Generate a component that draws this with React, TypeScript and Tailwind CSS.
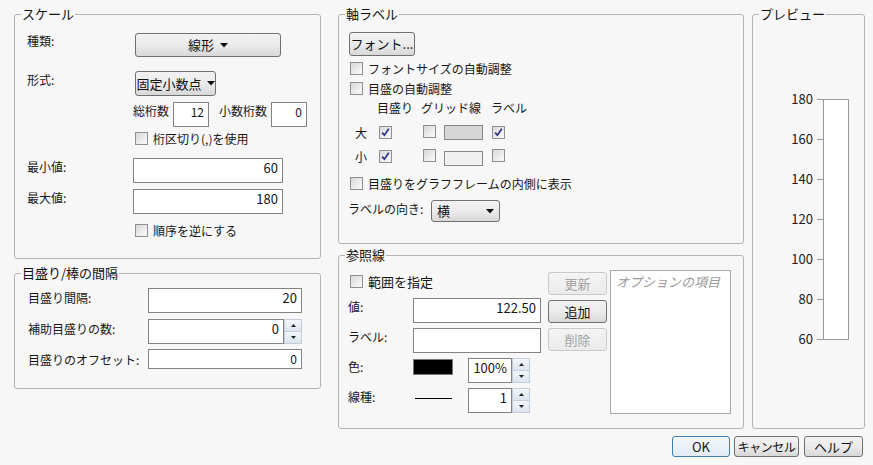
import React from "react";

const font = { fontFamily: '"Noto Sans CJK JP", "Noto Sans", sans-serif' };

function Group({ title, className, children }: { title: string; className: string; children?: React.ReactNode }) {
	return (
		<fieldset className={`border border-[#b4b4b4] rounded-[3px] p-0 m-0 min-w-0 ${className}`}>
			<legend className="ml-[6px] px-[1px] text-[13px] leading-4 text-[#111]">{title}</legend>
			{children}
		</fieldset>
	);
}

function Check({ checked = false }: { checked?: boolean }) {
	return (
		<span className="inline-flex w-[13px] h-[13px] shrink-0 border border-[#8e8f8f] bg-gradient-to-br from-[#d8d8d8] to-[#fbfbfb] items-center justify-center">
			{checked && (
				<svg width="11" height="11" viewBox="0 0 11 11">
					<path d="M2.2 5.6 L4.4 8.2 L8.8 1.8" fill="none" stroke="#2c2f84" strokeWidth="1.7" />
				</svg>
			)}
		</span>
	);
}

function CheckRow({ label, checked, className = "" }: { label: string; checked?: boolean; className?: string }) {
	return (
		<div className={`flex items-center h-[13px] ${className}`}>
			<Check checked={checked} />
			<span className="ml-[5px] whitespace-nowrap">{label}</span>
		</div>
	);
}

function Arrow() {
	return (
		<svg width="8" height="5" viewBox="0 0 8 5" className="shrink-0">
			<polygon points="0,0 8,0 4,4.5" fill="#111" />
		</svg>
	);
}

function Btn({ className, children, disabled }: { className: string; children: React.ReactNode; disabled?: boolean }) {
	return (
		<div
			className={`flex items-center rounded-[3px] border whitespace-nowrap ${
				disabled
					? "border-[#c9c9c9] bg-gradient-to-b from-[#f4f4f4] to-[#ebebeb] text-[#a3a3a3]"
					: "border-[#707070] bg-gradient-to-b from-[#f2f2f2] via-[#ebebeb] to-[#d8d8d8] text-[#111]"
			} ${className}`}
		>
			{children}
		</div>
	);
}

function Input({ value, className }: { value?: string; className: string }) {
	return <div className={`border border-[#838383] bg-white text-right pr-[4px] pt-[1px] ${className}`}>{value}</div>;
}

function Spin({ className }: { className: string }) {
	return (
		<div className={`flex flex-col w-[18px] ${className}`}>
			<div className="flex-1 flex items-center justify-center border border-[#c3ccd8] bg-gradient-to-b from-[#f3f6fa] to-[#dde4ee]">
				<svg width="5" height="3" viewBox="0 0 5 3"><polygon points="0,3 5,3 2.5,0" fill="#222" /></svg>
			</div>
			<div className="flex-1 flex items-center justify-center border border-t-0 border-[#c3ccd8] bg-gradient-to-b from-[#f3f6fa] to-[#dde4ee]">
				<svg width="5" height="3" viewBox="0 0 5 3"><polygon points="0,0 5,0 2.5,3" fill="#222" /></svg>
			</div>
		</div>
	);
}

const ticks = ["180", "160", "140", "120", "100", "80", "60"];

export default function App() {
	return (
		<div style={font} className="w-[873px] h-[465px] bg-[#f7f7f7] text-[12px] leading-4 text-[#161616] flex flex-col overflow-hidden">
			<div className="flex pt-[6px] pl-[14px]">
				{/* left column */}
				<div className="flex flex-col w-[307px]">
					<Group title="スケール" className="h-[253px]">
						<div className="flex flex-col">
							<div className="mt-[11px] flex items-start">
								<span className="ml-[12px] w-[108px]">種類:</span>
								<Btn className="w-[146px] h-[24px] justify-center gap-[6px] text-[13px]">
									<span>線形</span>
									<Arrow />
								</Btn>
							</div>
							<div className="mt-[14px] flex items-start">
								<span className="ml-[12px] w-[108px] pt-[1px]">形式:</span>
								<Btn className="w-[81px] h-[25px] justify-center gap-[5px] text-[13px]">
									<span>固定小数点</span>
									<Arrow />
								</Btn>
							</div>
							<div className="mt-[6px] flex items-start">
								<span className="ml-[118px] w-[40px] pt-[1px] whitespace-nowrap">総桁数</span>
								<Input value="12" className="w-[36px] h-[25px]" />
								<span className="ml-[10px] w-[52px] pt-[1px] whitespace-nowrap">小数桁数</span>
								<Input value="0" className="w-[36px] h-[25px]" />
							</div>
							<CheckRow label="桁区切り(,)を使用" className="mt-[5px] ml-[120px]" />
							<div className="mt-[13px] flex items-start">
								<span className="ml-[12px] w-[106px] pt-[1px]">最小値:</span>
								<Input value="60" className="w-[150px] h-[25px] text-[13px]" />
							</div>
							<div className="mt-[6px] flex items-start">
								<span className="ml-[12px] w-[106px] pt-[1px]">最大値:</span>
								<Input value="180" className="w-[150px] h-[25px] text-[13px]" />
							</div>
							<CheckRow label="順序を逆にする" className="mt-[10px] ml-[120px]" />
						</div>
					</Group>
					<Group title="目盛り/棒の間隔" className="mt-[6px] h-[124px]">
						<div className="flex flex-col">
							<div className="mt-[7px] flex items-start">
								<span className="ml-[13px] w-[120px] pt-[2px]">目盛り間隔:</span>
								<Input value="20" className="w-[154px] h-[25px] text-[13px]" />
							</div>
							<div className="mt-[6px] flex items-start">
								<span className="ml-[13px] w-[120px] pt-[2px]">補助目盛りの数:</span>
								<Input value="0" className="w-[136px] h-[25px] text-[13px]" />
								<Spin className="h-[25px]" />
							</div>
							<div className="mt-[5px] flex items-start">
								<span className="ml-[13px] w-[120px] pt-[3px] whitespace-nowrap">目盛りのオフセット:</span>
								<Input value="0" className="w-[154px] h-[20px]" />
							</div>
						</div>
					</Group>
				</div>

				{/* middle column */}
				<div className="ml-[17px] flex flex-col w-[406px]">
					<Group title="軸ラベル" className="h-[238px]">
						<div className="flex flex-col">
							<Btn className="mt-[10px] ml-[10px] w-[66px] h-[24px] justify-center text-[13px]">フォント...</Btn>
							<CheckRow label="フォントサイズの自動調整" className="mt-[6px] ml-[11px]" />
							<CheckRow label="目盛の自動調整" className="mt-[7px] ml-[11px]" />
							<div className="mt-[5px] flex h-[16px]">
								<span className="ml-[38px] w-[44px]">目盛り</span>
								<span className="w-[70px] whitespace-nowrap">グリッド線</span>
								<span>ラベル</span>
							</div>
							<div className="mt-[10px] flex items-center h-[13px]">
								<span className="ml-[16px] w-[24px]">大</span>
								<Check checked />
								<span className="ml-[31px]"><Check /></span>
								<span className="ml-[8px] w-[39px] h-[15px] border border-[#888] bg-[#d6d6d6]" />
								<span className="ml-[9px]"><Check checked /></span>
							</div>
							<div className="mt-[11px] flex items-center h-[13px]">
								<span className="ml-[16px] w-[24px]">小</span>
								<Check checked />
								<span className="ml-[31px]"><Check /></span>
								<span className="ml-[8px] mt-[3px] w-[39px] h-[15px] border border-[#888] bg-[#f0f0f0]" />
								<span className="ml-[9px]"><Check /></span>
							</div>
							<CheckRow label="目盛りをグラフフレームの内側に表示" className="mt-[14px] ml-[11px]" />
							<div className="mt-[10px] flex items-start">
								<span className="ml-[9px] w-[83px] pt-[1px] whitespace-nowrap">ラベルの向き:</span>
								<Btn className="w-[69px] h-[22px] justify-between px-[5px] text-[13px]">
									<span>横</span>
									<Arrow />
								</Btn>
							</div>
						</div>
					</Group>
					<Group title="参照線" className="mt-[3px] h-[182px]">
						<div className="flex">
							<div className="flex flex-col w-[202px]">
								<CheckRow label="範囲を指定" className="mt-[12px] ml-[11px] text-[13px]" />
								<div className="mt-[10px] flex items-start">
									<span className="ml-[9px] w-[65px] pt-[1px]">値:</span>
									<Input value="122.50" className="w-[128px] h-[25px] text-[13px]" />
								</div>
								<div className="mt-[5px] flex items-start">
									<span className="ml-[9px] w-[65px] pt-[1px]">ラベル:</span>
									<Input className="w-[128px] h-[25px]" />
								</div>
								<div className="mt-[5px] flex items-start">
									<span className="ml-[9px] w-[65px] pt-[1px]">色:</span>
									<span className="mt-[1px] w-[40px] h-[16px] border border-[#777] bg-black" />
									<Input value="100%" className="ml-[15px] w-[44px] h-[25px] text-[13px]" />
									<Spin className="h-[25px]" />
								</div>
								<div className="mt-[5px] flex items-start">
									<span className="ml-[9px] w-[67px] pt-[1px]">線種:</span>
									<span className="mt-[10px] w-[37px] h-px bg-black" />
									<Input value="1" className="ml-[16px] w-[44px] h-[25px] text-[13px]" />
									<Spin className="h-[25px]" />
								</div>
							</div>
							<div className="ml-[7px] flex flex-col w-[59px]">
								<Btn disabled className="mt-[9px] h-[23px] justify-center text-[13px]">更新</Btn>
								<Btn className="mt-[5px] h-[23px] justify-center text-[13px]">追加</Btn>
								<Btn disabled className="mt-[5px] h-[23px] justify-center text-[13px]">削除</Btn>
							</div>
							<div className="ml-[3px] mt-[7px] w-[121px] h-[144px] border border-[#a8a8a8] bg-white pl-[5px] pt-[3px] italic text-[13px] text-[#9a9a9a] whitespace-nowrap">
								オプションの項目
							</div>
						</div>
					</Group>
				</div>

				{/* preview */}
				<Group title="プレビュー" className="ml-[8px] w-[113px] h-[423px]">
					<div className="mt-[69px] flex items-start">
						<div className="flex flex-col gap-[24px]">
							{ticks.map((t) => (
								<div key={t} className="flex items-center h-[16px]">
									<span className="w-[60px] text-right text-[13px] text-[#1a1a1a]">{t}</span>
									<span className="ml-[4px] w-[6px] h-px bg-[#9a9a9a]" />
								</div>
							))}
						</div>
						<div className="mt-[8px] w-[26px] h-[241px] border border-[#9a9a9a] bg-white" />
					</div>
				</Group>
			</div>

			<div className="mt-[7px] flex justify-end pr-[10px] text-[13px]">
				<div className="w-[58px] h-[21px] flex items-center justify-center rounded-[3px] border border-[#3c7fb1] bg-gradient-to-b from-[#f4f8fb] to-[#e2ebf3]">OK</div>
				<Btn className="ml-[4px] w-[65px] h-[21px] justify-center text-[12px] tracking-[-0.5px]">キャンセル</Btn>
				<Btn className="ml-[5px] w-[59px] h-[21px] justify-center">ヘルプ</Btn>
			</div>
		</div>
	);
}
